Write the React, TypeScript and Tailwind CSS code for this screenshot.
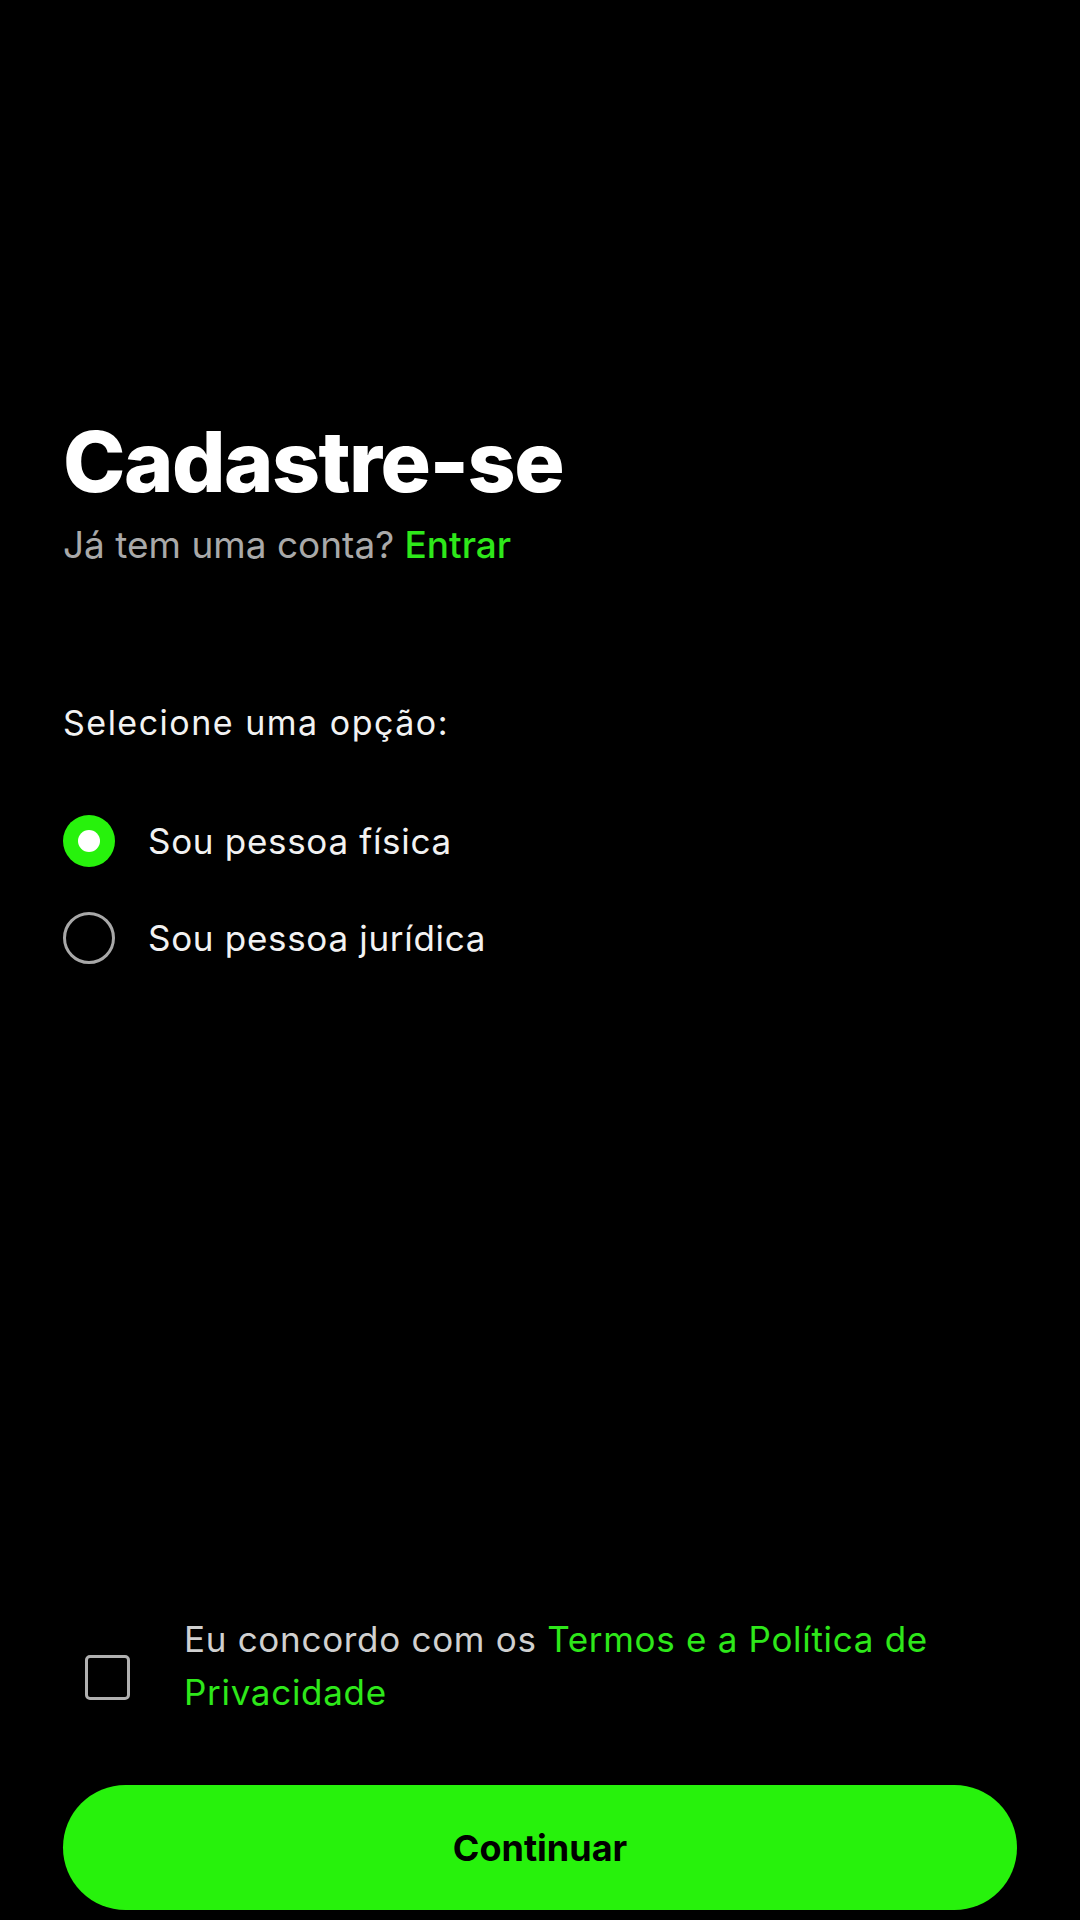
import React, { useState } from 'react';

const App: React.FC = () => {
  const [tipo, setTipo] = useState<'fisica' | 'juridica'>('fisica');
  const [aceito, setAceito] = useState(false);

  const opcoes = [
    { id: 'fisica' as const, label: 'Sou pessoa física' },
    { id: 'juridica' as const, label: 'Sou pessoa jurídica' },
  ];

  return (
    <div
      className="flex h-[1920px] w-full flex-col bg-black px-[63px] text-white"
      style={{ fontFamily: 'Inter, "Noto Sans", sans-serif' }}
    >
      <h1 className="mt-[420px] text-[84px] font-extrabold leading-none tracking-[-1.5px] text-white">
        Cadastre-se
      </h1>
      <p className="mt-[22px] text-[37px] leading-none text-[#a9a9a9]">
        Já tem uma conta? <span className="font-medium text-[#2ee81a]">Entrar</span>
      </p>

      <p className="mt-[143px] text-[34px] leading-none tracking-[1.5px] text-[#f2f2f2]">Selecione uma opção:</p>

      <div className="mt-[75px] flex flex-col gap-[45px]">
        {opcoes.map((op) => {
          const ativo = tipo === op.id;
          return (
            <button
              key={op.id}
              onClick={() => setTipo(op.id)}
              className="flex items-center gap-[33px] text-left"
            >
              {ativo ? (
                <span className="flex h-[52px] w-[52px] items-center justify-center rounded-full bg-[#27f20c]">
                  <span className="h-[22px] w-[22px] rounded-full bg-white" />
                </span>
              ) : (
                <span className="h-[52px] w-[52px] rounded-full border-[3px] border-[#a8a8a8]" />
              )}
              <span className="text-[35px] leading-none tracking-[0.7px] text-[#f2f2f2]">{op.label}</span>
            </button>
          );
        })}
      </div>

      <div className="flex-1" />

      <div className="flex items-start gap-[54px] pl-[22px]">
        <button
          onClick={() => setAceito(!aceito)}
          className={`mt-[42px] h-[45px] w-[45px] shrink-0 rounded-[5px] border-[3px] ${
            aceito ? 'border-[#27f20c] bg-[#27f20c]' : 'border-[#b0b0b0]'
          }`}
          aria-label="Aceitar termos"
        />
        <p className="text-[35px] leading-[53px] tracking-[0.7px] text-[#d0d0d0]">
          Eu concordo com os <span className="text-[#2ee81a]">Termos e a Política de Privacidade</span>
        </p>
      </div>

      <button className="mb-[10px] mt-[66px] flex h-[125px] w-full items-center justify-center rounded-full bg-[#27f20c]">
        <span className="text-[36px] font-bold text-black">Continuar</span>
      </button>
    </div>
  );
};

export default App;
